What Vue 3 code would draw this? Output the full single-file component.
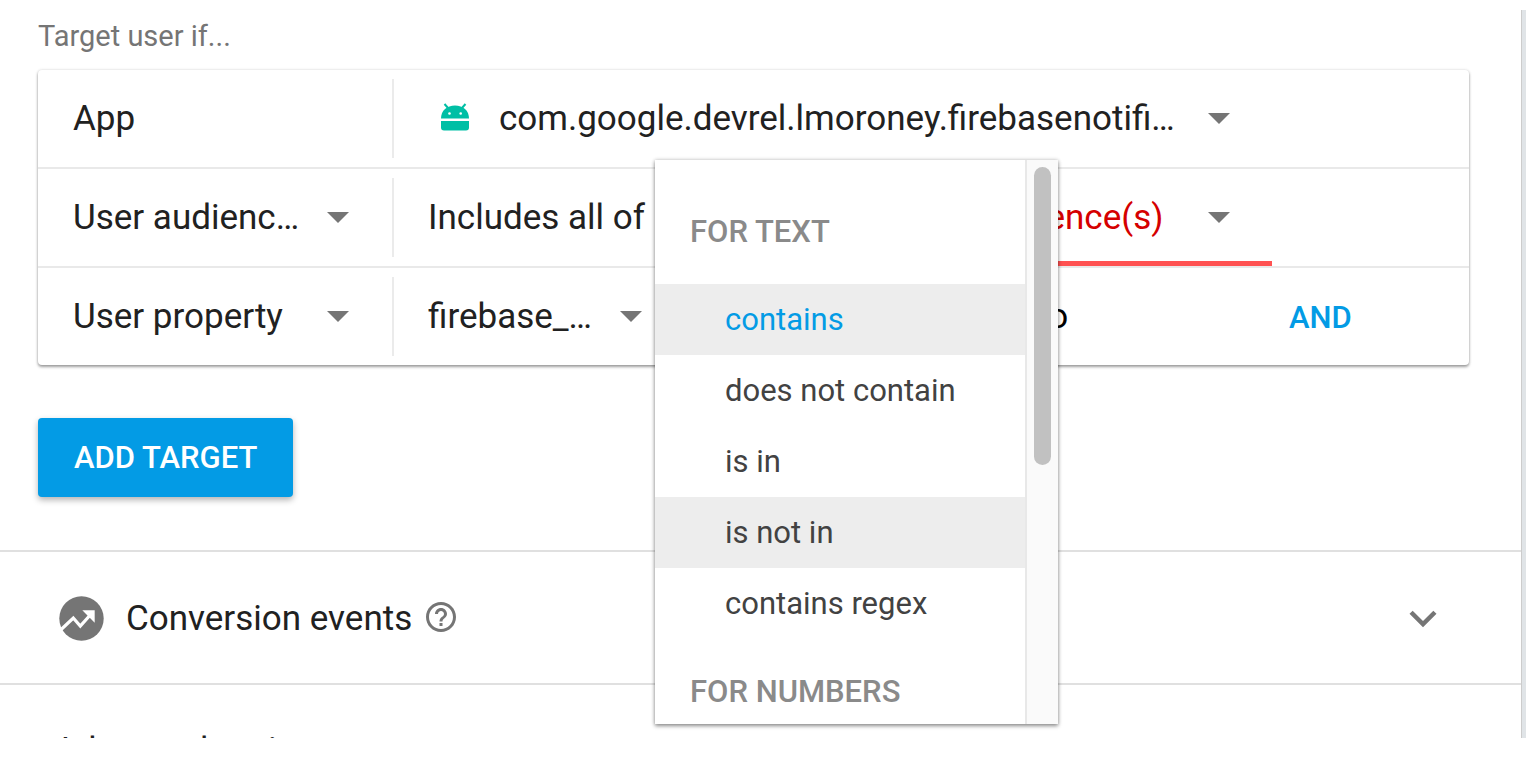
<script setup>
import { ref } from 'vue'

const groups = [
  { label: 'FOR TEXT', options: ['contains', 'does not contain', 'is in', 'is not in', 'contains regex'] },
  { label: 'FOR NUMBERS', options: [] },
]
const selected = ref('contains')
const focused = ref('is not in')
const propertyValue = ref('target demo')
</script>

<template>
  <main class="panel">
    <section class="targeting">
      <h2 class="caption">Target user if...</h2>

      <div class="card">
        <div class="row">
          <div class="cell name">App</div>
          <div class="cell fields">
            <svg class="android" viewBox="0 0 28 28" aria-hidden="true">
              <path d="M0 15.5C0 7.500 6 2.500 14 2.500S28 7.500 28 15.500Z" />
              <path d="M0 18H28V24.500Q28 27.500 25 27.500H3Q0 27.500 0 24.500Z" />
              <path class="antenna" d="M3.500 1L7.500 5.500M24.500 1L20.500 5.500" />
              <circle class="eye" cx="8.500" cy="10.500" r="1.300" />
              <circle class="eye" cx="19.700" cy="10.500" r="1.300" />
            </svg>
            <label class="picker grow">
              <select aria-label="App">
                <option>com.google.devrel.lmoroney.firebasenotifications</option>
              </select>
              <svg class="arrow" viewBox="0 0 22 11" aria-hidden="true"><path d="M0 0H22L11 11Z" /></svg>
            </label>
          </div>
        </div>

        <div class="row">
          <div class="cell name">
            <label class="picker grow">
              <select aria-label="Target type">
                <option>User audience(s)</option>
              </select>
              <svg class="arrow" viewBox="0 0 22 11" aria-hidden="true"><path d="M0 0H22L11 11Z" /></svg>
            </label>
          </div>
          <div class="cell fields">
            <label class="picker condition">
              <select aria-label="Audience condition">
                <option>Includes all of</option>
              </select>
            </label>
            <label class="picker value invalid">
              <select aria-label="Audience">
                <option>Select audience(s)</option>
              </select>
              <svg class="arrow" viewBox="0 0 22 11" aria-hidden="true"><path d="M0 0H22L11 11Z" /></svg>
            </label>
          </div>
        </div>

        <div class="row">
          <div class="cell name">
            <label class="picker grow">
              <select aria-label="Target type">
                <option>User property</option>
              </select>
              <svg class="arrow" viewBox="0 0 22 11" aria-hidden="true"><path d="M0 0H22L11 11Z" /></svg>
            </label>
          </div>
          <div class="cell fields">
            <label class="picker property">
              <select aria-label="Property">
                <option>firebase_property</option>
              </select>
              <svg class="arrow" viewBox="0 0 22 11" aria-hidden="true"><path d="M0 0H22L11 11Z" /></svg>
            </label>
            <input v-model="propertyValue" class="value" type="text" aria-label="Property value" />
          </div>
          <button class="and" type="button">AND</button>
        </div>

        <div class="menu">
          <div class="menu-list" role="listbox" aria-label="Operator">
            <template v-for="group in groups" :key="group.label">
              <div class="group">{{ group.label }}</div>
              <button
                v-for="option in group.options"
                :key="option"
                type="button"
                role="option"
                class="option"
                :class="{ selected: option === selected, focused: option === focused }"
                :aria-selected="option === selected"
                @click="selected = option"
              >{{ option }}</button>
            </template>
          </div>
          <div class="track"><div class="thumb"></div></div>
        </div>
      </div>

      <button class="add" type="button">ADD TARGET</button>
    </section>

    <section class="section">
      <svg class="badge" viewBox="0 0 45 45" aria-hidden="true">
        <circle cx="22.500" cy="22.500" r="22.200" />
        <path class="line" d="M0 35.500L14.300 22L21.300 30L33 17" />
        <path class="head" d="M23.300 14.300H35.700V26.700Z" />
      </svg>
      <h2 class="title">Conversion events</h2>
      <button class="icon-button help" type="button" aria-label="About conversion events">
        <svg viewBox="0 0 24 24" aria-hidden="true">
          <path d="M11 18h2v-2h-2v2zm1-16C6.480 2 2 6.480 2 12s4.480 10 10 10 10-4.480 10-10S17.520 2 12 2zm0 18c-4.410 0-8-3.590-8-8s3.590-8 8-8 8 3.590 8 8-3.590 8-8 8zm0-14c-2.210 0-4 1.790-4 4h2c0-1.100.9-2 2-2s2 .9 2 2c0 2-3 1.750-3 5h2c0-2.250 3-2.500 3-5 0-2.210-1.790-4-4-4z" />
        </svg>
      </button>
      <button class="icon-button expand" type="button" aria-label="Expand conversion events">
        <svg viewBox="0 0 24 24" aria-hidden="true"><path d="M7.410 7.840L12 12.420l4.590-4.580L18 9.250l-6 6-6-6z" /></svg>
      </button>
    </section>

    <section class="section advanced">
      <h2 class="title">Advanced options</h2>
    </section>
  </main>
</template>

<style>
body {
  margin: 0;
  background: #fff;
}
</style>

<style scoped>
* {
  box-sizing: border-box;
}

.panel {
  height: calc(100vh - 50px);
  margin: 10px 0 40px;
  overflow: hidden;
  border-right: 4px solid #e0e4e7;
  box-shadow: inset -1px 0 #ccc;
  font-family: Roboto, "Liberation Sans", sans-serif;
  font-size: 35px;
  line-height: 42px;
  color: #212121;
}

.targeting {
  padding: 8px 53px 53px 38px;
}

.caption {
  margin: 0 0 16px;
  font-size: 29px;
  font-weight: 400;
  line-height: 36px;
  color: #757575;
}

.card {
  position: relative;
  border-radius: 4px;
  background: #fff;
  box-shadow: 0 2px 3px rgba(0, 0, 0, 0.36), 0 0 3px rgba(0, 0, 0, 0.16);
}

.row {
  display: grid;
  grid-template-columns: 354px 1fr 197px;
  height: 99px;
  border-bottom: 2px solid #e9e9e9;
}

.row:nth-child(3) {
  height: 97px;
  border-bottom: 0;
}

.cell {
  display: flex;
  align-items: center;
  min-width: 0;
}

.name {
  padding: 0 43px 0 35px;
}

.fields {
  position: relative;
  padding-left: 36px;
}

.fields::before {
  content: "";
  position: absolute;
  left: 0;
  top: 9px;
  bottom: 9px;
  width: 2px;
  background: #ebebeb;
}

.picker {
  display: grid;
  align-items: center;
  height: 100%;
  min-width: 0;
}

.grow {
  flex: 1;
}

.picker select,
.arrow {
  grid-area: 1 / 1;
}

select,
input {
  width: 100%;
  min-width: 0;
  margin: 0;
  padding: 0;
  border: 0;
  outline: 0;
  background: transparent;
  color: inherit;
  font: inherit;
  appearance: none;
}

.picker select {
  height: 56px;
  padding-right: 44px;
  overflow: hidden;
  text-overflow: ellipsis;
  white-space: nowrap;
}

.arrow {
  justify-self: end;
  width: 22px;
  height: 11px;
  fill: #757575;
  pointer-events: none;
}

.android {
  width: 28px;
  height: 28px;
  margin: 0 30px 4px 13px;
  fill: #00bfa5;
}

.antenna {
  stroke: #00bfa5;
  stroke-width: 2;
}

.eye {
  fill: #fff;
}

.android + .picker {
  padding-right: 42px;
}

.condition {
  width: 260px;
}

.condition select {
  padding-right: 0;
}

.property {
  width: 214px;
}

.value {
  width: 397px;
  margin-left: auto;
}

input.value {
  padding-left: 4px;
  color: #000;
}

.invalid {
  padding-right: 42px;
  box-shadow: inset 0 -5px #ff5252;
  color: #d50000;
}

button {
  margin: 0;
  border: 0;
  font: inherit;
  white-space: nowrap;
  cursor: pointer;
}

.and {
  justify-self: start;
  align-self: center;
  padding: 2px 17px 0;
  background: transparent;
  color: #039be5;
  font-size: 31px;
  font-weight: 500;
}

.menu {
  position: absolute;
  z-index: 2;
  top: 90px;
  left: 617px;
  display: flex;
  width: 403px;
  height: 564px;
  background: #fff;
  box-shadow: 0 2px 4px rgba(0, 0, 0, 0.4), 0 0 4px rgba(0, 0, 0, 0.2);
}

.menu-list {
  flex: 1;
  padding-top: 19px;
  overflow: hidden;
  font-size: 31px;
}

.group {
  padding: 0 35px;
  line-height: 105px;
  color: #8a8a8a;
  font-weight: 500;
}

.option {
  display: block;
  width: 100%;
  height: 71px;
  padding: 0 70px;
  background: #fff;
  color: #424242;
  text-align: left;
}

.option.selected,
.option.focused {
  background: #ededed;
}

.option.selected {
  color: #039be5;
}

.track {
  width: 33px;
  padding: 7px 7px 0;
  border-left: 2px solid #e8e8e8;
  background: #fafafa;
}

.thumb {
  height: 298px;
  border-radius: 9px;
  background: #c1c1c1;
}

.add {
  display: block;
  height: 79px;
  margin-top: 53px;
  padding: 1px 36px 0;
  border-radius: 4px;
  background: #039be5;
  box-shadow: 0 3px 6px rgba(0, 0, 0, 0.3);
  color: #fff;
  font-size: 31px;
  font-weight: 500;
}

.section {
  display: flex;
  align-items: center;
  height: 133px;
  margin-right: 1px;
  padding: 2px 71px 0 59px;
  border-top: 2px solid #e0e0e0;
}

.title {
  margin: 0;
  font-size: 35px;
  font-weight: 400;
}

.badge {
  width: 45px;
  height: 45px;
  margin-right: 22px;
  fill: #757575;
}

.line {
  fill: none;
  stroke: #fff;
  stroke-width: 3.2;
}

.head {
  fill: #fff;
}

.icon-button {
  display: grid;
  padding: 0;
  background: transparent;
}

.icon-button svg {
  width: 100%;
  fill: #757575;
}

.help {
  width: 36px;
  margin: 0 0 4px 11px;
}

.expand {
  width: 54px;
  margin: 2px 0 0 auto;
}

.advanced {
  padding-top: 0;
  padding-left: 54px;
}
</style>
